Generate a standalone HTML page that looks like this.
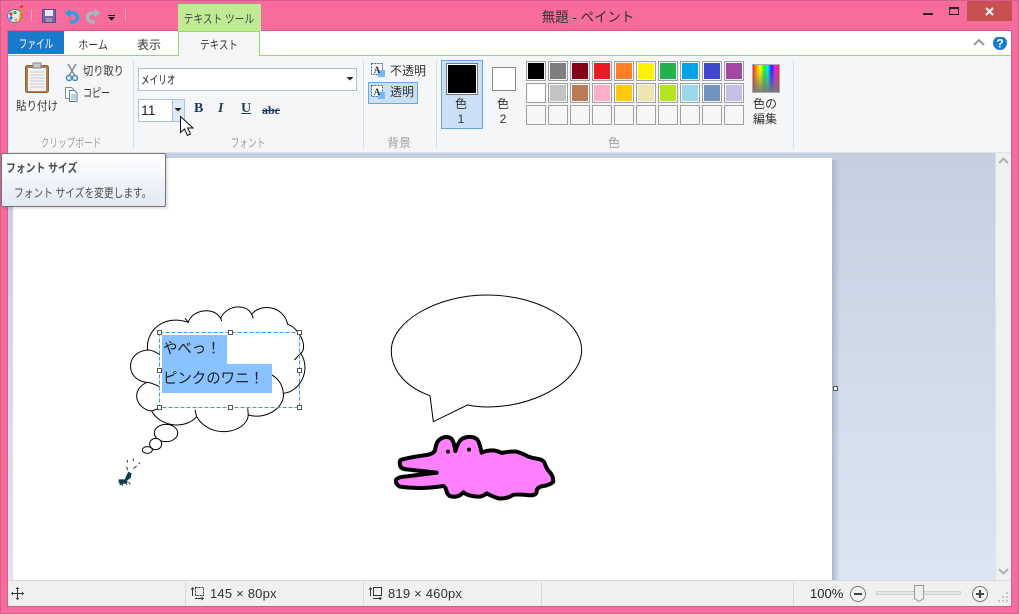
<!DOCTYPE html>
<html lang="ja"><head><meta charset="utf-8"><title>無題 - ペイント</title>
<style>
html,body{margin:0;padding:0}
body{width:1019px;height:614px;overflow:hidden;position:relative;background:#f76c9c;font-family:"Liberation Sans","Noto Sans CJK JP",sans-serif;font-size:12px;color:#333}
div,span{position:absolute;box-sizing:border-box;white-space:nowrap}
.c{transform:translateX(-50%)}
.g{color:#a0a0a0}
.sep{width:1px;background:#dcdfe4;top:60px;height:89px}
.ss{width:1px;background:#d9d9d9;top:582px;height:24px}
.sw{width:20px;height:20px;border:1px solid #a0a0a0;background:#f5f6f7}
.sw i{display:block;width:16px;height:16px;margin:1px}
.h{width:5px;height:5px;border:1px solid #555;background:#fff}
.jp{font-family:"Noto Sans CJK JP",sans-serif}
.l{transform-origin:0 0}
</style></head><body>
<div style="left:0;top:0;width:1019px;height:614px;border:1px solid #d65c8a"></div>
<div style="left:7px;top:30px;width:1005px;height:577px;border:1px solid #d65c8a"></div>
<svg style="position:absolute;left:0;top:0" width="178" height="30">
<g><ellipse cx="15" cy="16" rx="7.500" ry="6.500" fill="#dfe8f2" stroke="#5a7ba5"/><circle cx="11" cy="14" r="1.600" fill="#d33"/><circle cx="15" cy="12.500" r="1.600" fill="#3a3"/><circle cx="11" cy="18" r="1.600" fill="#36c"/><circle cx="16" cy="20" r="1.500" fill="#e8a01c"/><path d="M20 21L22 8" stroke="#e8891c" stroke-width="2.500"/><path d="M20 7l3-1" stroke="#c33" stroke-width="2"/></g>
<rect x="31" y="9" width="1" height="12" fill="#e9a3bd"/>
<rect x="42.500" y="9.500" width="13" height="13" fill="#7b62ae" stroke="#5c4a8e"/><rect x="45" y="10" width="8" height="6" fill="#e8e8f0"/><rect x="46" y="18" width="6" height="4" fill="#9a9a9a"/>
<path d="M68 13h5a4.500 4.500 0 0 1 0 9h-3" fill="none" stroke="#3a9bdc" stroke-width="3.500"/><path d="M64.500 13l6-4.500v9z" fill="#3a9bdc"/>
<path d="M97 13h-5a4.500 4.500 0 0 0 0 9h3" fill="none" stroke="#a9b4bd" stroke-width="3.500"/><path d="M100.500 13l-6-4.500v9z" fill="#a9b4bd"/>
<rect x="108" y="15" width="7" height="1" fill="#111"/><path d="M108 17h7l-3.500 3.500z" fill="#111"/>
<rect x="125" y="9" width="1" height="12" fill="#e9a3bd"/>
</svg>
<div class="c" style="left:588px;top:7px;font-size:14px;color:#333;transform:translateX(-50%) scaleX(.96)">無題 - ペイント</div>
<div style="left:923px;top:13px;width:10px;height:2px;background:#222"></div>
<div style="left:949px;top:7px;width:10px;height:8px;border:1px solid #222;border-top-width:2px"></div>
<div style="left:967px;top:1px;width:45px;height:20px;background:#c75050"></div>
<svg style="position:absolute;left:985px;top:7px" width="10" height="9"><path d="M1 1l7 7M8 1l-7 7" stroke="#fff" stroke-width="2"/></svg>

<!-- client -->
<div style="left:8px;top:31px;width:1003px;height:25px;background:#fff"></div>
<div style="left:8px;top:56px;width:1003px;height:97px;background:#f5f6f7;border-bottom:1px solid #dfe2e6"></div>
<div style="left:8px;top:55px;width:1003px;height:1px;background:#8fdf5f"></div>
<div style="left:178px;top:4px;width:83px;height:27px;background:#c0eb94"></div>
<div style="left:219px;top:10px;font-size:12px;color:#444;transform:translateX(-50%) scaleX(.81)">テキスト ツール</div>
<div style="left:8px;top:31px;width:56px;height:23px;background:#1a7acb"></div>
<div style="left:36px;top:35px;color:#fff;transform:translateX(-50%) scaleX(.72)">ファイル</div>
<div style="left:93px;top:36px;transform:translateX(-50%) scaleX(.83)">ホーム</div>
<div class="c" style="left:149px;top:36px">表示</div>
<div style="left:178px;top:31px;width:82px;height:25px;background:#f5f6f7;border:1px solid #8fdf5f;border-bottom:none"></div>
<div style="left:219px;top:36px;transform:translateX(-50%) scaleX(.79)">テキスト</div>
<svg style="position:absolute;left:973px;top:37px" width="40" height="20"><path d="M1 8l5-5 5 5" fill="none" stroke="#9a9a9a" stroke-width="2"/><circle cx="27" cy="6" r="7" fill="#1a7acb"/><text x="27" y="10.500" text-anchor="middle" font-size="12" font-weight="bold" fill="#fff" font-family="Liberation Sans">?</text></svg>

<!-- clipboard -->
<svg style="position:absolute;left:20px;top:60px" width="60" height="36">
<rect x="5.500" y="5.500" width="23" height="27" rx="2" fill="#b07c4a" stroke="#8a6238"/><rect x="8" y="8" width="18" height="23" fill="#f4f4f4"/>
<path d="M10 12h14M10 15h14M10 18h14M10 21h14M10 24h14M10 27h14" stroke="#c4c8d0"/><rect x="13" y="3" width="8" height="5" fill="#c9c9c9" stroke="#888"/>
</svg>
<div style="left:37px;top:97px;transform:translateX(-50%) scaleX(.875)">貼り付け</div>
<svg style="position:absolute;left:62px;top:60px" width="20" height="44">
<path d="M6 4l7 12M14 4l-7 12" stroke="#7e8a96" stroke-width="1.500"/><circle cx="7" cy="18" r="2.500" fill="none" stroke="#2e7fc4" stroke-width="1.300"/><circle cx="13" cy="18" r="2.500" fill="none" stroke="#2e7fc4" stroke-width="1.300"/>
<path d="M3.500 27.500h6l2 2v9h-8z" fill="#fff" stroke="#8a8a8a"/><path d="M7.500 30.500h5l2.500 2.500v8.500h-7.500z" fill="#fff" stroke="#5a7ba5"/><path d="M9 35h5M9 37h5M9 39h5" stroke="#7aa0cc"/>
</svg>
<div class="l" style="left:83px;top:62px;color:#333;transform:scaleX(.85)">切り取り</div>
<div class="l" style="left:83px;top:84px;color:#333;transform:scaleX(.75)">コピー</div>
<div class="g" style="left:71px;top:134px;transform:translateX(-50%) scaleX(.72)">クリップボード</div>
<div class="sep" style="left:133px"></div>

<!-- font -->
<div style="left:138px;top:68px;width:219px;height:23px;background:#fff;border:1px solid #abc0db"></div>
<div class="l" style="left:141px;top:71px;transform:scaleX(.72);color:#222">メイリオ</div>
<svg style="position:absolute;left:346px;top:76px" width="8" height="6"><path d="M0.500 1h7l-3.500 3.500z" fill="#222"/></svg>
<div style="left:138px;top:99px;width:35px;height:23px;background:#fff;border:1px solid #abc0db;line-height:20px;padding-left:2px;font-size:14px;color:#222">11</div>
<div style="left:172px;top:99px;width:13px;height:23px;background:#dceaf9;border:1px solid #abc0db"></div>
<svg style="position:absolute;left:174px;top:107px" width="8" height="6"><path d="M0.500 1h7l-3.500 3.500z" fill="#222"/></svg>
<div style="left:194px;top:101px;font:bold 14px 'Liberation Serif',serif;color:#1f3a5f">B</div>
<div style="left:218px;top:101px;font:italic bold 14px 'Liberation Serif',serif;color:#1f3a5f">I</div>
<div style="left:241px;top:101px;font:bold 14px 'Liberation Serif',serif;color:#1f3a5f;text-decoration:underline">U</div>
<div style="left:262px;top:103px;font:bold 12px 'Liberation Serif',serif;color:#1f3a5f;text-decoration:line-through">abc</div>
<div class="g" style="left:248px;top:134px;transform:translateX(-50%) scaleX(.72)">フォント</div>
<div class="sep" style="left:363px"></div>

<!-- background -->
<svg style="position:absolute;left:370px;top:62px" width="18" height="44">
<rect x="1.500" y="1.500" width="11" height="11" fill="#fff" stroke="#2b6ca8" stroke-dasharray="2 1"/><rect x="8" y="8" width="7" height="7" fill="#74b8f5"/><text x="7" y="11" text-anchor="middle" font-size="9" font-weight="bold" fill="#234" font-family="Liberation Serif">A</text>
</svg>
<div style="left:390px;top:62px">不透明</div>
<div style="left:368px;top:82px;width:50px;height:22px;background:#c9e0f7;border:1px solid #66a7e8;padding-left:21px;line-height:19px">透明</div>
<svg style="position:absolute;left:370px;top:84px" width="18" height="18">
<rect x="1.500" y="1.500" width="11" height="11" fill="#fff" stroke="#2b6ca8" stroke-dasharray="2 1"/><rect x="8" y="8" width="7" height="7" fill="#74b8f5"/><text x="7" y="11" text-anchor="middle" font-size="9" font-weight="bold" fill="#234" font-family="Liberation Serif">A</text>
</svg>
<div class="c g" style="left:399px;top:134px">背景</div>
<div class="sep" style="left:436px"></div>

<!-- colors -->
<div style="left:441px;top:60px;width:42px;height:69px;background:#c9e0f7;border:1px solid #66a7e8"></div>
<div style="left:446px;top:63px;width:32px;height:32px;background:#000;border:1px solid #777;box-shadow:inset 0 0 0 1px #fff"></div>
<div class="c" style="left:461px;top:97px;line-height:15px;text-align:center">色<br>1</div>
<div style="left:492px;top:67px;width:24px;height:24px;background:#fff;border:1px solid #888"></div>
<div class="c" style="left:503px;top:97px;line-height:15px;text-align:center">色<br>2</div>
<div class="sw" style="left:526px;top:61px"><i style="background:#000"></i></div>
<div class="sw" style="left:548px;top:61px"><i style="background:#7f7f7f"></i></div>
<div class="sw" style="left:570px;top:61px"><i style="background:#880015"></i></div>
<div class="sw" style="left:592px;top:61px"><i style="background:#ed1c24"></i></div>
<div class="sw" style="left:614px;top:61px"><i style="background:#ff7f27"></i></div>
<div class="sw" style="left:636px;top:61px"><i style="background:#fff200"></i></div>
<div class="sw" style="left:658px;top:61px"><i style="background:#22b14c"></i></div>
<div class="sw" style="left:680px;top:61px"><i style="background:#00a2e8"></i></div>
<div class="sw" style="left:702px;top:61px"><i style="background:#3f48cc"></i></div>
<div class="sw" style="left:724px;top:61px"><i style="background:#a349a4"></i></div>
<div class="sw" style="left:526px;top:83px"><i style="background:#fff"></i></div>
<div class="sw" style="left:548px;top:83px"><i style="background:#c3c3c3"></i></div>
<div class="sw" style="left:570px;top:83px"><i style="background:#b97a57"></i></div>
<div class="sw" style="left:592px;top:83px"><i style="background:#ffaec9"></i></div>
<div class="sw" style="left:614px;top:83px"><i style="background:#ffc90e"></i></div>
<div class="sw" style="left:636px;top:83px"><i style="background:#efe4b0"></i></div>
<div class="sw" style="left:658px;top:83px"><i style="background:#b5e61d"></i></div>
<div class="sw" style="left:680px;top:83px"><i style="background:#99d9ea"></i></div>
<div class="sw" style="left:702px;top:83px"><i style="background:#7092be"></i></div>
<div class="sw" style="left:724px;top:83px"><i style="background:#c8bfe7"></i></div>
<div class="sw" style="left:526px;top:105px"></div>
<div class="sw" style="left:548px;top:105px"></div>
<div class="sw" style="left:570px;top:105px"></div>
<div class="sw" style="left:592px;top:105px"></div>
<div class="sw" style="left:614px;top:105px"></div>
<div class="sw" style="left:636px;top:105px"></div>
<div class="sw" style="left:658px;top:105px"></div>
<div class="sw" style="left:680px;top:105px"></div>
<div class="sw" style="left:702px;top:105px"></div>
<div class="sw" style="left:724px;top:105px"></div>
<div style="left:752px;top:64px;width:28px;height:29px;border:1px solid #aaa;padding:0;background:linear-gradient(rgba(120,120,120,0) 15%,rgba(120,120,120,.95) 100%),linear-gradient(90deg,#f22,#fa0,#ff0,#2e2,#0ee,#22f,#e2e,#f22)"></div>
<div class="c" style="left:765px;top:97px;line-height:15px;text-align:center">色の<br>編集</div>
<div class="c g" style="left:614px;top:134px">色</div>
<div class="sep" style="left:793px"></div>

<!-- workspace -->
<div style="left:8px;top:153px;width:987px;height:428px;background:linear-gradient(#c5cfe0,#dce6f2)"></div>
<div style="left:832px;top:160px;width:8px;height:421px;background:linear-gradient(90deg,#aab6cc,rgba(170,182,204,0))"></div>
<div style="left:13px;top:158px;width:819px;height:423px;background:#fff"></div>
<div style="left:995px;top:153px;width:16px;height:428px;background:#f0f0f0;border-left:1px solid #e2e2e2"></div>
<svg style="position:absolute;left:998px;top:156px" width="12" height="10"><path d="M1 7l4.500-4.500L10 7" fill="none" stroke="#b0b0b0" stroke-width="2"/></svg>
<svg style="position:absolute;left:998px;top:567px" width="12" height="10"><path d="M1 2l4.500 4.500L10 2" fill="none" stroke="#b0b0b0" stroke-width="2"/></svg>
<div style="left:833px;top:386px;width:5px;height:5px;border:1px solid #555;background:#fff"></div>

<!-- drawing -->
<svg style="position:absolute;left:0;top:0" width="1019" height="614">
<g transform="translate(110 295) scale(.33333)" fill="none" stroke="#000" stroke-width="3">
<path fill="#fff" d="M113 165C105 115 155 55 235 82C245 45 310 32 332 70C350 28 410 25 425 58C450 25 520 30 533 88C570 100 595 160 572 175C605 225 570 290 520 295C525 340 465 375 415 360C410 415 300 435 260 365C225 405 150 395 125 348C85 345 55 290 110 262C45 255 45 170 113 165Z"/>
<path d="M553 195L575 172M520 295C518 270 505 250 485 240M415 360L413 340M260 365L255 345M125 348C135 345 145 340 150 336M110 262C120 262 135 268 148 275M113 165C125 165 140 172 150 180M235 82L225 70M332 70L335 78M425 58L430 70"/>
<ellipse cx="168" cy="414" rx="35" ry="26" fill="#fff"/>
<ellipse cx="137" cy="447" rx="18" ry="17" fill="#fff"/>
<ellipse cx="112" cy="465" rx="15" ry="10" fill="#fff"/>
</g>
<g transform="translate(110 450) scale(.33333)">
<path d="M52 30v8M70 25v8M50 50l3 10M80 48l-10 8M90 38l-4 4" stroke="#0f3f45" stroke-width="3" fill="none"/>
<path d="M55 65l10 5-3 14-14 10-4-5 6-14z M26 88h20l8 8-8 6-6-2-2 10-4-8-4 6-2-10-2 0z" fill="#0f3f45"/>
<path d="M48 100l3 5M56 96l5 7" stroke="#0f3f45" stroke-width="3"/>
</g>
<g transform="translate(380 285) scale(.33333)">
<path fill="#fff" stroke="#000" stroke-width="3" d="M150 332C60 300 33 240 34 195C35 110 170 30 320 30C480 30 605 110 605 195C605 300 420 390 262 360L160 410Z"/>
<path fill="#ff80ff" stroke="#000" stroke-width="12" stroke-linejoin="round" d="M81 520Q100 515 132 511Q165 508 166 491Q168 475 176 466Q185 458 196 456Q208 455 215 462Q222 470 226 498Q235 468 247 461Q260 454 275 456Q290 458 295 469Q300 480 305 503Q318 496 340 496Q352 497 365 504Q390 498 410 500Q430 506 445 515Q460 520 475 522Q492 525 495 537Q500 552 508 560Q520 572 520 590Q510 600 490 603Q470 606 470 620Q468 634 440 630Q400 626 395 632Q380 642 355 640Q335 634 320 625Q305 638 285 634Q262 632 250 622Q238 636 222 635Q205 636 200 620Q197 605 190 603Q120 614 60 605Q46 598 48 585Q52 576 80 574L170 563L80 553Q62 552 60 540Q58 528 62 525Q70 522 81 520Z"/>
<circle cx="204" cy="500" r="6" fill="#000"/><circle cx="267" cy="494" r="6" fill="#000"/>
</g>
</svg>
<div style="left:162px;top:335px;width:65px;height:29px;background:#8ac2ff"></div>
<div style="left:162px;top:364px;width:110px;height:29px;background:#8ac2ff"></div>
<div class="jp l" style="left:163px;top:337px;font-size:15px;line-height:22px;color:#222;transform:scaleX(.96)">やべっ！</div>
<div class="jp l" style="left:163px;top:367px;font-size:15px;line-height:22px;color:#222;transform:scaleX(.96)">ピンクのワニ！</div>
<svg style="position:absolute;left:155px;top:328px" width="150" height="84"><rect x="4.500" y="4.500" width="140" height="75" fill="none" stroke="#3399ff" stroke-dasharray="4 2"/></svg>
<div class="h" style="left:157px;top:330px"></div><div class="h" style="left:228px;top:330px"></div><div class="h" style="left:297px;top:330px"></div>
<div class="h" style="left:157px;top:368px"></div><div class="h" style="left:297px;top:368px"></div>
<div class="h" style="left:157px;top:405px"></div><div class="h" style="left:228px;top:405px"></div><div class="h" style="left:297px;top:405px"></div>

<!-- tooltip -->
<div style="left:1px;top:153px;width:165px;height:54px;background:linear-gradient(#fff,#e3eaf4);border:1px solid #767676;border-radius:2px;box-shadow:2px 2px 2px rgba(0,0,0,.12)"></div>
<div class="l" style="left:6px;top:159px;font-weight:bold;color:#4c4c4c;transform:scaleX(.82)">フォント サイズ</div>
<div class="l" style="left:14px;top:184px;color:#4c4c4c;transform:scaleX(.81)">フォント サイズを変更します。</div>
<svg style="position:absolute;left:178px;top:114px" width="16" height="24"><path d="M2.500 2.500V18.500l4-3.500 3 6.500 3-1.500-3-6h5.500z" fill="#fff" stroke="#111"/></svg>

<!-- status -->
<div style="left:8px;top:580px;width:1003px;height:26px;background:#f0f0f0;border-top:1px solid #d9d9d9"></div>
<div class="ss" style="left:185px"></div><div class="ss" style="left:363px"></div><div class="ss" style="left:541px"></div><div class="ss" style="left:793px"></div>
<svg style="position:absolute;left:10px;top:586px" width="14" height="16"><path d="M7.500 2v11M2 7.500h11" stroke="#333"/><path d="M7.500 1l2 2h-4zM7.500 14l2-2h-4zM1 7.500l2 2v-4zM14 7.500l-2 2v-4z" fill="#333"/></svg>
<svg style="position:absolute;left:190px;top:586px" width="16" height="16"><path d="M2.500 2v8" stroke="#333"/><path d="M2.500 1l2 2.500h-4z" fill="#333"/><rect x="5.500" y="1.500" width="8" height="8" fill="none" stroke="#333" stroke-dasharray="2 1"/><path d="M5 12.500h8" stroke="#333"/><path d="M14 12.500l-2.500 2v-4z" fill="#333"/></svg>
<div style="left:210px;top:586px;font-size:13px;color:#333;letter-spacing:.2px;font-family:'Liberation Sans',sans-serif">145 × 80px</div>
<svg style="position:absolute;left:368px;top:586px" width="16" height="16"><path d="M2.500 2v8" stroke="#333"/><path d="M2.500 1l2 2.500h-4z" fill="#333"/><rect x="5.500" y="1.500" width="8" height="8" fill="none" stroke="#333"/><path d="M5 12.500h8" stroke="#333"/><path d="M14 12.500l-2.500 2v-4z" fill="#333"/></svg>
<div style="left:388px;top:586px;font-size:13px;color:#333;letter-spacing:.2px;font-family:'Liberation Sans',sans-serif">819 × 460px</div>
<div style="left:810px;top:586px;font-size:13px;color:#222;font-family:'Liberation Sans',sans-serif">100%</div>
<svg style="position:absolute;left:848px;top:582px" width="163" height="24">
<circle cx="10" cy="12" r="7.500" fill="#f4f4f4" stroke="#777"/><rect x="6" y="11" width="8" height="2" fill="#444"/>
<rect x="28.500" y="9.500" width="84" height="3" fill="#e6e6e6" stroke="#d2d2d2"/>
<path d="M66.500 3.500h9v13l-4.500 3-4.500-3z" fill="#f0f0f0" stroke="#999"/>
<circle cx="132" cy="12" r="7.500" fill="#f4f4f4" stroke="#777"/><path d="M128 12h8M132 8v8" stroke="#444" stroke-width="2"/>
<path d="M158 18h2v2h-2zM154 18h2v2h-2zM150 18h2v2h-2zM158 14h2v2h-2zM154 14h2v2h-2zM158 10h2v2h-2z" fill="#c4c4c4"/>
</svg>
</body></html>
